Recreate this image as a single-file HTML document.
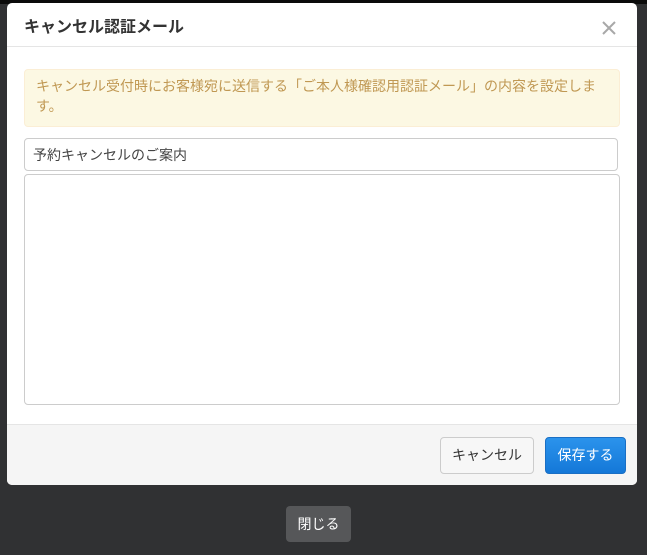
<!DOCTYPE html>
<html><head><meta charset="utf-8"><style>
*{box-sizing:border-box;margin:0;padding:0}
body{width:647px;height:555px;background:#303133;font-family:"Liberation Sans","Noto Sans CJK JP",sans-serif;position:relative;overflow:hidden}
.top{position:absolute;left:0;top:0;width:647px;height:4px;background:#0b0b0b}
.modal{position:absolute;left:7px;top:3px;width:630px;height:482px;background:#fff;border-radius:5px;overflow:hidden}
.hd{height:44px;border-bottom:1px solid #e5e5e5;position:relative}
.hd h3{position:absolute;left:17px;top:10px;font-size:16px;font-weight:bold;color:#333}
.x{position:absolute;left:595px;top:18px}
.alert{position:absolute;left:17px;top:66px;width:596px;height:58px;background:#fcf8e3;border:1px solid #fbeed5;border-radius:4px;color:#c09853;font-size:14px;line-height:20px;padding:6px 11px}
.in{position:absolute;left:17px;top:135px;width:594px;height:33px;border:1px solid #ccc;border-radius:4px;font-size:14px;color:#444;padding:6px 8px}
.ta{position:absolute;left:17px;top:171px;width:596px;height:231px;border:1px solid #ccc;border-radius:4px}
.ft{position:absolute;left:0;top:421px;width:630px;height:61px;background:#f5f5f5;border-top:1px solid #e5e5e5}
.b1{position:absolute;left:433px;top:12px;width:94px;height:37px;background:#f7f7f7;border:1px solid #ccc;border-radius:4px;font-size:14px;color:#333;text-align:center;line-height:35px}
.b2{position:absolute;left:538px;top:12px;width:81px;height:37px;background:linear-gradient(#2b93ec,#1478d8);border:1px solid #1a6fc4;border-radius:4px;font-size:14px;color:#fff;text-align:center;line-height:35px}
.close{position:absolute;left:286px;top:506px;width:65px;height:36px;background:#565759;border-radius:4px;color:#fff;font-size:14px;text-align:center;line-height:36px}
</style></head><body>
<div class="top"></div>
<div class="modal">
<div class="hd"><h3>キャンセル認証メール</h3><svg class="x" width="14" height="14" viewBox="0 0 14 14"><path d="M1 1L13 13M13 1L1 13" stroke="#a8a8a8" stroke-width="2"/></svg></div>
<div class="alert">キャンセル受付時にお客様宛に送信する「ご本人様確認用認証メール」の内容を設定します。</div>
<div class="in">予約キャンセルのご案内</div>
<div class="ta"></div>
<div class="ft"><div class="b1">キャンセル</div><div class="b2">保存する</div></div>
</div>
<div class="close">閉じる</div>
</body></html>
